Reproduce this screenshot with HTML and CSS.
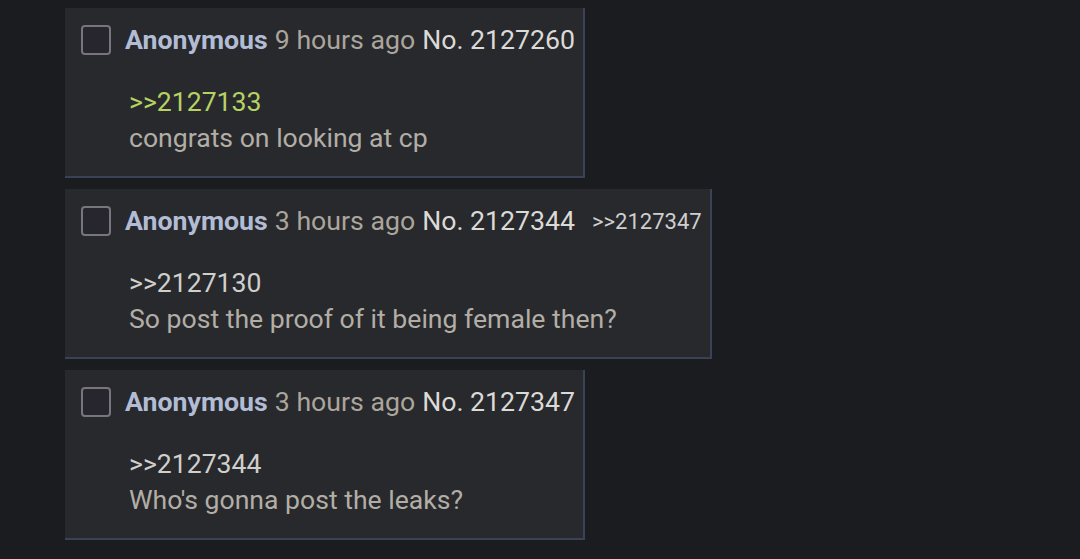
FILE: index.html
```html
<!DOCTYPE html>
<html>
<head>
<meta charset="utf-8">
<link rel="stylesheet" href="styles.css">
</head>
<body>
<div class="thread">
  <div class="post">
    <div class="head">
      <span class="check"></span>
      <span class="name">Anonymous</span>
      <span class="time">9 hours ago</span>
      <span class="no">No. 2127260</span>
    </div>
    <div class="body">
      <div class="quote green">&gt;&gt;2127133</div>
      <div class="text">congrats on looking at cp</div>
    </div>
  </div>
  <div class="post">
    <div class="head">
      <span class="check"></span>
      <span class="name">Anonymous</span>
      <span class="time">3 hours ago</span>
      <span class="no">No. 2127344</span>
      <span class="backlink">&gt;&gt;2127347</span>
    </div>
    <div class="body">
      <div class="quote">&gt;&gt;2127130</div>
      <div class="text">So post the proof of it being female then?</div>
    </div>
  </div>
  <div class="post">
    <div class="head">
      <span class="check"></span>
      <span class="name">Anonymous</span>
      <span class="time">3 hours ago</span>
      <span class="no">No. 2127347</span>
    </div>
    <div class="body">
      <div class="quote">&gt;&gt;2127344</div>
      <div class="text">Who's gonna post the leaks?</div>
    </div>
  </div>
</div>
</body>
</html>
```
FILE: styles.css
```css
html, body {
  margin: 0;
  background: #1b1c1f;
}
body {
  padding: 8px 0 0 65px;
  font-family: Roboto, "Noto Sans", sans-serif;
}
.thread {
  display: flex;
  flex-direction: column;
  align-items: flex-start;
  gap: 11px;
}
.post {
  background: #27292d;
  border-right: 2px solid #394257;
  border-bottom: 2px solid #394257;
  box-sizing: border-box;
  height: 170px;
  padding: 17px 8px 0 16px;
}
.head {
  display: flex;
  align-items: center;
  height: 30px;
  font-size: 26.7px;
  white-space: nowrap;
}
.check {
  width: 26px;
  height: 26px;
  border: 2px solid #77767c;
  border-radius: 4px;
  background: #27252e;
  margin-right: 14px;
  flex: none;
}
.name {
  color: #b2bdd5;
  font-weight: bold;
  margin-right: 7px;
}
.time {
  color: #aba59c;
  margin-right: 7px;
}
.no {
  color: #dcdad6;
}
.backlink {
  color: #cfcfcf;
  font-size: 22px;
  margin-left: 17px;
}
.body {
  padding-left: 48px;
  margin-top: 29px;
  font-size: 26.6px;
  line-height: 36px;
  color: #b3aea5;
}
.quote {
  color: #d0cfcc;
}
.quote.green {
  color: #b6d262;
}
```
